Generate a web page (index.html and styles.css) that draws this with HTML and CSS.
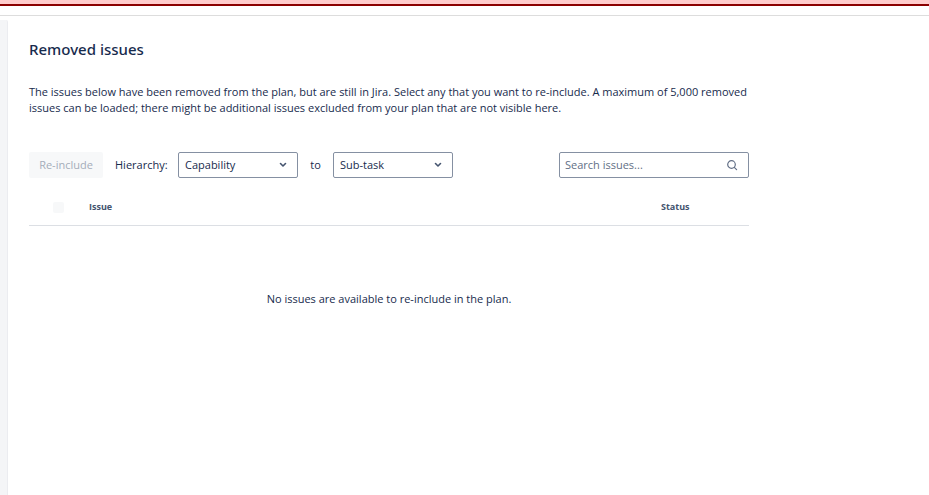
FILE: index.html
```html
<!DOCTYPE html>
<html lang="en">
<head>
    <meta charset="UTF-8">
    <meta name="viewport" content="width=device-width, initial-scale=1.0">
    <title>Removed issues</title>
    <link rel="stylesheet" href="styles.css">
</head>
<body>
    <div class="banner"></div>
    <header class="topbar"></header>
    <div class="layout">
        <aside class="sidebar"></aside>
        <main class="content">
            <h1>Removed issues</h1>
            <p class="description">The issues below have been removed from the plan, but are still in Jira. Select any that you want to re-include. A maximum of 5,000 removed issues can be loaded; there might be additional issues excluded from your plan that are not visible here.</p>

            <div class="toolbar">
                <button class="reinclude" type="button" disabled>Re-include</button>
                <label class="hierarchy" for="from">Hierarchy:</label>
                <div class="select">
                    <select id="from">
                        <option>Capability</option>
                        <option>Epic</option>
                        <option>Story</option>
                        <option>Sub-task</option>
                    </select>
                    <svg class="chevron" viewBox="0 0 8 6"><path d="M1.5 1.5 L4 4 L6.5 1.5"/></svg>
                </div>
                <label class="to" for="to">to</label>
                <div class="select">
                    <select id="to">
                        <option>Sub-task</option>
                        <option>Story</option>
                        <option>Epic</option>
                        <option>Capability</option>
                    </select>
                    <svg class="chevron" viewBox="0 0 8 6"><path d="M1.5 1.5 L4 4 L6.5 1.5"/></svg>
                </div>
                <div class="search">
                    <input type="text" placeholder="Search issues..." aria-label="Search issues">
                    <svg class="search-icon" viewBox="0 0 12 12"><circle cx="5.5" cy="5.5" r="3.8"/><path d="M8.3 8.3 L10.6 10.6"/></svg>
                </div>
            </div>

            <table>
                <thead>
                    <tr>
                        <th class="col-check"><input type="checkbox" aria-label="Select all issues" disabled></th>
                        <th>Issue</th>
                        <th class="col-status">Status</th>
                    </tr>
                </thead>
                <tbody>
                    <tr>
                        <td class="empty" colspan="3">No issues are available to re-include in the plan.</td>
                    </tr>
                </tbody>
            </table>
        </main>
    </div>
</body>
</html>
```

FILE: styles.css
```css
* {
    box-sizing: border-box;
}
body {
    margin: 0;
    min-height: 100vh;
    display: flex;
    flex-direction: column;
    background: #fff;
    color: #172b4d;
    font-family: "Open Sans", "Noto Sans", sans-serif;
    font-size: 11px;
    line-height: 16px;
}
.banner {
    height: 6px;
    background: #ffcccc;
    border-bottom: 2px solid #8b0000;
}
.topbar {
    height: 10px;
    border-bottom: 1px solid #dddddd;
}
.layout {
    flex: 1;
    display: flex;
    padding-top: 4px;
}
.sidebar {
    width: 8px;
    background: #f4f5f7;
    border-right: 1px solid #ebecf0;
    border-top-right-radius: 2px;
}
.content {
    flex: 1;
    padding: 20px 21px;
}
h1 {
    margin: 0;
    font-family: "Noto Sans", "Open Sans", sans-serif;
    font-size: 15px;
    font-weight: 500;
    line-height: 18px;
}
.description {
    margin: 26px 0 36px;
    max-width: 740px;
}
.toolbar {
    display: flex;
    align-items: center;
    max-width: 720px;
}
button,
select,
.search input {
    height: 26px;
    font: inherit;
    border-radius: 2px;
}
.reinclude {
    width: 74px;
    padding: 0;
    border: none;
    background: #f7f8f9;
    color: #a5adba;
}
.hierarchy {
    width: 75px;
    padding-left: 12px;
}
.to {
    width: 35px;
    text-align: center;
}
.select,
.search {
    position: relative;
}
select {
    display: block;
    width: 120px;
    padding: 0 24px 0 6px;
    border: 1px solid #8590a2;
    background: #fff;
    color: #172b4d;
    appearance: none;
}
.chevron,
.search-icon {
    position: absolute;
    fill: none;
    pointer-events: none;
}
.chevron {
    top: 10px;
    right: 11px;
    width: 8px;
    height: 6px;
    stroke: #44546f;
    stroke-width: 1.6;
    stroke-linecap: round;
    stroke-linejoin: round;
}
.search {
    width: 190px;
    margin-left: auto;
}
.search input {
    display: block;
    width: 100%;
    padding: 0 28px 1px 5px;
    border: 1px solid #8590a2;
    color: #172b4d;
}
.search input::placeholder {
    color: #626f86;
    opacity: 1;
}
.search-icon {
    top: 7px;
    right: 11px;
    width: 12px;
    height: 12px;
    stroke: #626f86;
    stroke-width: 1.2;
    stroke-linecap: round;
}
table {
    width: 100%;
    max-width: 720px;
    margin-top: 12px;
    border-collapse: collapse;
}
th {
    height: 35px;
    padding: 0;
    border-bottom: 1px solid #dcdfe4;
    color: #44546f;
    font-size: 9px;
    font-weight: 700;
    text-align: left;
}
.col-check {
    width: 60px;
    padding-left: 24px;
}
.col-status {
    width: 88px;
}
th input {
    display: block;
    width: 11px;
    height: 11px;
    margin: 0;
    border-radius: 2px;
    background: #f7f8f9;
    appearance: none;
}
.empty {
    padding: 65px 0;
    text-align: center;
}
```
